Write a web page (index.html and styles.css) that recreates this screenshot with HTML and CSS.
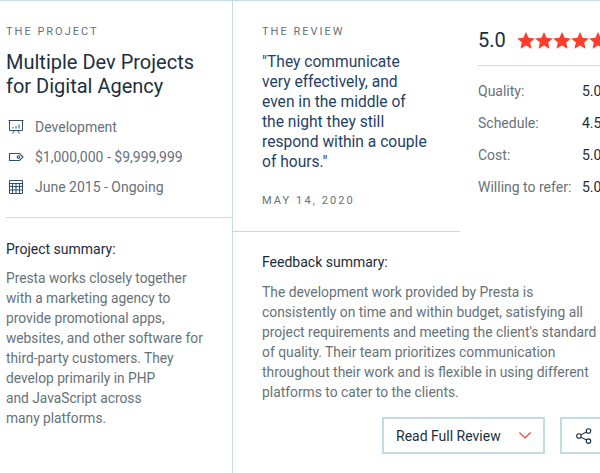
FILE: index.html
```html
<!DOCTYPE html>
<html lang="en">

<head>
    <meta charset="UTF-8">
    <title>Review</title>
    <link rel="stylesheet" href="styles.css">
</head>

<body>
<div class="review-card">
    <div class="project">
        <div class="project-top">
            <h5 class="label">The Project</h5>
            <h3 class="project-title">Multiple Dev Projects<br>for Digital Agency</h3>
            <ul class="facts">
                <li>
                    <svg class="fact-icon" width="16" height="16" viewBox="0 0 16 16" fill="none" stroke="#2f4f75" stroke-width="1">
                        <path d="M.5 1.500h15M1.500 1.500v10h13v-10M4.500 14.500l2-3M11.500 14.500l-2-3"/>
                        <path d="M5 9.500v-1.500M8 9.500v-2.500M11 9.500v-4"/>
                    </svg>
                    Development
                </li>
                <li>
                    <svg class="fact-icon" width="16" height="16" viewBox="0 0 16 16" fill="none" stroke="#2f4f75" stroke-width="1.100">
                        <path d="M1.500 4.500h10l3.500 3.500-3.500 3.500h-10z"/>
                        <circle cx="10.500" cy="8" r="1.300"/>
                    </svg>
                    $1,000,000 - $9,999,999
                </li>
                <li>
                    <svg class="fact-icon" width="16" height="16" viewBox="0 0 16 16" fill="none" stroke="#2f4f75" stroke-width="1">
                        <path d="M1.500 1.500h13v13h-13zM1.500 4.500h13M1.500 7.500h13M1.500 11h13M4.500 4.500v10M8 4.500v10M11.500 4.500v10"/>
                    </svg>
                    June 2015 - Ongoing
                </li>
            </ul>
        </div>
        <div class="project-summary">
            <h4 class="summary-title">Project summary:</h4>
            <p class="summary-text">Presta works closely together<br>with a marketing agency to<br>provide promotional apps,<br>websites, and other software for<br>third-party customers. They<br>develop primarily in PHP<br>and JavaScript across<br>many platforms.</p>
        </div>
    </div>

    <div class="review">
        <div class="review-top">
            <div class="quote-box">
                <h5 class="label">The Review</h5>
                <p class="quote">"They communicate<br>very effectively, and<br>even in the middle of<br>the night they still<br>respond within a couple<br>of hours."</p>
                <p class="date">May 14, 2020</p>
            </div>
            <div class="rating">
                <div class="rating-main">
                    <span class="rating-num">5.0</span>
                    <span class="stars">
                        <svg width="18" height="17" viewBox="0 0 18 17"><path d="M9 0l2.600 5.700 6.200.7-4.600 4.200 1.300 6.100L9 13.600l-5.500 3.100 1.300-6.100L.2 6.400l6.200-.7z"/></svg>
                        <svg width="18" height="17" viewBox="0 0 18 17"><path d="M9 0l2.600 5.700 6.200.7-4.600 4.200 1.300 6.100L9 13.600l-5.500 3.100 1.300-6.100L.2 6.400l6.200-.7z"/></svg>
                        <svg width="18" height="17" viewBox="0 0 18 17"><path d="M9 0l2.600 5.700 6.200.7-4.600 4.200 1.300 6.100L9 13.600l-5.500 3.100 1.300-6.100L.2 6.400l6.200-.7z"/></svg>
                        <svg width="18" height="17" viewBox="0 0 18 17"><path d="M9 0l2.600 5.700 6.200.7-4.600 4.200 1.300 6.100L9 13.600l-5.500 3.100 1.300-6.100L.2 6.400l6.200-.7z"/></svg>
                        <svg width="18" height="17" viewBox="0 0 18 17"><path d="M9 0l2.600 5.700 6.200.7-4.600 4.200 1.300 6.100L9 13.600l-5.500 3.100 1.300-6.100L.2 6.400l6.200-.7z"/></svg>
                    </span>
                </div>
                <dl class="scores">
                    <dt>Quality:</dt><dd>5.0</dd>
                    <dt>Schedule:</dt><dd>4.5</dd>
                    <dt>Cost:</dt><dd>5.0</dd>
                    <dt>Willing to refer:</dt><dd>5.0</dd>
                </dl>
            </div>
        </div>
        <div class="feedback">
            <h4 class="summary-title">Feedback summary:</h4>
            <p class="summary-text">The development work provided by Presta is<br>consistently on time and within budget, satisfying all<br>project requirements and meeting the client's standard<br>of quality. Their team prioritizes communication<br>throughout their work and is flexible in using different<br>platforms to cater to the clients.</p>
            <div class="actions">
                <button class="btn btn-read">
                    Read Full Review
                    <svg width="12" height="7" viewBox="0 0 12 7" fill="none" stroke="#ff3d2e" stroke-width="1.200"><path d="M.5.5L6 6 11.500.5"/></svg>
                </button>
                <button class="btn btn-share">
                    <svg width="18" height="18" viewBox="0 0 16 16" fill="none" stroke="#1e2f3d" stroke-width="1">
                        <circle cx="3.500" cy="8" r="2"/>
                        <circle cx="12" cy="3.500" r="2"/>
                        <circle cx="12" cy="12.500" r="2"/>
                        <path d="M5.300 7l5-2.600M5.300 9l5 2.600"/>
                    </svg>
                </button>
            </div>
        </div>
    </div>
</div>
</body>

</html>
```

FILE: styles.css
```css
html,
body {
    margin: 0;
    height: 100%;
    overflow: hidden;
}

body {
    font-family: Roboto, sans-serif;
    color: #1c2b39;
    background-color: #fff;
}

.review-card {
    display: flex;
    width: 640px;
    height: 473px;
    box-sizing: border-box;
    border-top: 1px solid #c5dbe3;
}

.project {
    flex: none;
    box-sizing: border-box;
    border-right: 1px solid #c5dbe3;
    width: 233px;
}

.project-top {
    margin-left: 6px;
    padding-top: 24px;
    padding-bottom: 15px;
    border-bottom: 1px solid #c5dbe3;
}

.label {
    margin: 0;
    font-size: 11px;
    line-height: 14px;
    font-weight: 400;
    letter-spacing: 2px;
    text-transform: uppercase;
    color: #667279;
}

.project-title {
    margin: 11px 0 0;
    font-size: 20px;
    line-height: 24px;
    font-weight: 400;
    color: #1c2f3f;
}

.facts {
    margin: 14px 0 0;
    padding: 0;
    list-style: none;
}

.facts li {
    display: flex;
    align-items: center;
    gap: 11px;
    height: 30px;
    padding-left: 2px;
    font-size: 14px;
    color: #667279;
}

.fact-icon {
    flex: none;
}

.project-summary {
    margin-left: 6px;
    padding-top: 22px;
}

.summary-title {
    margin: 0;
    font-size: 14px;
    line-height: 18px;
    font-weight: 400;
    color: #1c2b39;
}

.summary-text {
    margin: 10px 0 0;
    font-size: 13.750px;
    line-height: 20px;
    color: #667279;
}

.review {
    flex: 1;
}

.review-top {
    display: flex;
}

.quote-box {
    width: 227px;
    flex: none;
    box-sizing: border-box;
    height: 231px;
    padding: 24px 0 0 29px;
    border-bottom: 1px solid #c5dbe3;
}

.quote {
    margin: 13px 0 0;
    font-size: 15.600px;
    line-height: 20px;
    color: #1f3f68;
}

.date {
    margin: 22px 0 0;
    font-size: 11px;
    line-height: 14px;
    letter-spacing: 2.100px;
    text-transform: uppercase;
    color: #667279;
}

.rating {
    flex: 1;
    margin-left: 18px;
}

.rating-main {
    display: flex;
    align-items: center;
    gap: 11px;
    height: 65px;
    padding-top: 14px;
    box-sizing: border-box;
    border-bottom: 1px solid #c5dbe3;
}

.rating-num {
    font-size: 20px;
    color: #1c2f3f;
}

.stars {
    display: flex;
}

.stars svg {
    fill: #ff3d2e;
}

.scores {
    display: grid;
    grid-template-columns: 104px 1fr;
    grid-auto-rows: 32px;
    align-items: center;
    margin: 9px 0 0;
}

.scores dt {
    font-size: 14px;
    color: #667279;
}

.scores dd {
    margin: 0;
    font-size: 14px;
    color: #1c2b39;
}

.feedback {
    padding: 21px 0 0 29px;
}

.feedback .summary-text {
    margin-top: 11px;
    font-size: 13.850px;
}

.actions {
    display: flex;
    gap: 15px;
    margin: 15px 0 0 120px;
}

.btn {
    display: flex;
    align-items: center;
    justify-content: space-between;
    height: 37px;
    box-sizing: border-box;
    padding: 0 12px;
    background-color: #fff;
    border: 2px solid #c5dbe3;
    font-family: Roboto, sans-serif;
    font-size: 14px;
    color: #1c2f3f;
}

.btn-read {
    width: 163px;
}

.btn-share {
    width: 60px;
    padding: 0 13px;
}
```
